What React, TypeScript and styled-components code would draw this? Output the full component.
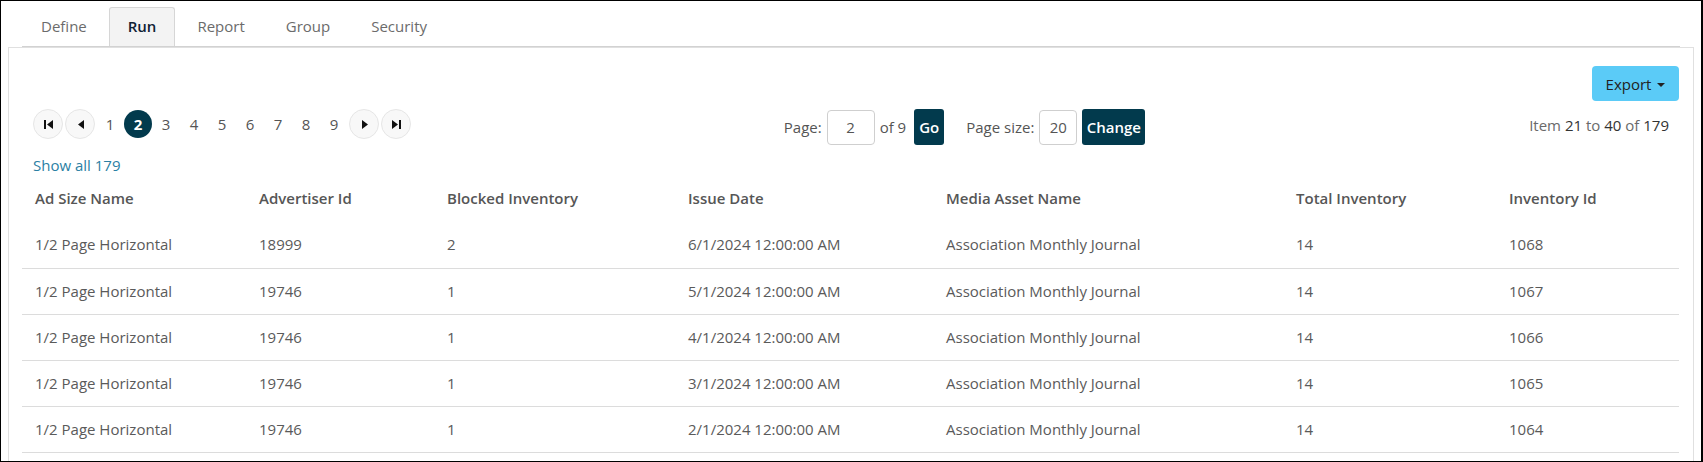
import React from "react";
import styled, { createGlobalStyle } from "styled-components";

const GlobalStyle = createGlobalStyle`
  * { box-sizing: border-box; }
  html, body { margin: 0; padding: 0; background: #fff; }
  body { font-family: "Open Sans", "Noto Sans", Arial, sans-serif; }
`;

const Frame = styled.div`
  width: 1703px;
  height: 462px;
  border-style: solid;
  border-color: #000;
  border-width: 1px 2px 1px 1px;
  overflow: hidden;
  background: #fff;
  padding: 6px 7px 0 7px;
`;

const TabBar = styled.ul`
  list-style: none;
  margin: 0 14px;
  padding: 0;
  display: flex;
  border-bottom: 1px solid #d2d2d2;
`;

const Tab = styled.li<{ $active?: boolean }>`
  height: 39px;
  display: flex;
  align-items: center;
  padding: 0 18px 2px;
  margin-right: 3px;
  font-size: 15px;
  border: 1px solid ${(p) => (p.$active ? "#d6d6d6" : "transparent")};
  border-bottom: none;
  border-radius: 3px 3px 0 0;
  background: ${(p) => (p.$active ? "#f3f3f3" : "transparent")};
  color: ${(p) => (p.$active ? "#0f2234" : "#6b6b6b")};
  font-weight: ${(p) => (p.$active ? 600 : 400)};
`;

const Panel = styled.div`
  border: 1px solid #e0e0e0;
  border-bottom: none;
  height: 600px;
  padding: 18px 14px 0 13px;
`;

const ExportRow = styled.div`
  display: flex;
  justify-content: flex-end;
`;

const ExportButton = styled.button`
  width: 87px;
  height: 35px;
  border: none;
  border-radius: 4px;
  background: #5bcbf7;
  color: #222;
  font-family: inherit;
  font-size: 15px;
  display: flex;
  align-items: center;
  justify-content: center;
  gap: 6px;
  padding: 0;
`;

const Caret = styled.span`
  width: 0;
  height: 0;
  border-left: 4px solid transparent;
  border-right: 4px solid transparent;
  border-top: 4px solid #222;
  margin-top: 2px;
`;

const PagerRow = styled.div`
  margin-top: 8px;
  height: 36px;
  display: flex;
  align-items: flex-start;
  justify-content: space-between;
  padding: 0 10px 0 11px;
`;

const Pagination = styled.div`
  display: flex;
  align-items: center;
  gap: 2px;
`;

const NavButton = styled.button`
  width: 30px;
  height: 30px;
  border-radius: 50%;
  border: 1px solid #e6e6e6;
  background: #f8f8f8;
  padding: 0;
  display: flex;
  align-items: center;
  justify-content: center;
`;

const Numbers = styled.div`
  display: flex;
  align-items: center;
  margin: 0 -1px;
`;

const PageNum = styled.span<{ $active?: boolean }>`
  width: 28px;
  height: 28px;
  display: flex;
  align-items: center;
  justify-content: center;
  font-size: 15px;
  border-radius: 50%;
  color: ${(p) => (p.$active ? "#fff" : "#555")};
  background: ${(p) => (p.$active ? "#023a4d" : "transparent")};
  font-weight: ${(p) => (p.$active ? 700 : 400)};
`;

const PageControls = styled.div`
  display: flex;
  align-items: center;
  font-size: 15px;
  color: #555;
  margin-right: 11px;
`;

const Label = styled.span<{ $gapLeft?: number }>`
  margin-left: ${(p) => p.$gapLeft ?? 0}px;
`;

const NumInput = styled.div<{ $w: number }>`
  width: ${(p) => p.$w}px;
  height: 35px;
  border: 1px solid #cfcfcf;
  border-radius: 4px;
  display: flex;
  align-items: center;
  justify-content: center;
  margin: 0 5px;
  color: #555;
`;

const DarkButton = styled.button<{ $w: number; $ml?: number }>`
  width: ${(p) => p.$w}px;
  height: 36px;
  margin-left: ${(p) => p.$ml ?? 0}px;
  border: none;
  border-radius: 3px;
  background: #023a4d;
  color: #fff;
  font-family: inherit;
  font-size: 15px;
  font-weight: 600;
  padding: 0;
`;

const ItemInfo = styled.div`
  margin-top: 6px;
  line-height: 20px;
  font-size: 15px;
  color: #6a6a6a;
  b {
    font-weight: 400;
    color: #333;
  }
`;

const ShowAll = styled.a`
  display: block;
  margin: 10px 0 0 11px;
  line-height: 20px;
  font-size: 15px;
  color: #2b7fa4;
  text-decoration: none;
`;

const Table = styled.table`
  width: 100%;
  border-collapse: collapse;
  table-layout: fixed;
`;

const Th = styled.th`
  height: 47px;
  padding: 0 0 1px 13px;
  text-align: left;
  font-size: 15px;
  font-weight: 600;
  color: #565656;
  white-space: nowrap;
`;

const Tr = styled.tr`
  border-bottom: 1px solid #dcdcdc;
`;

const Td = styled.td`
  height: 46px;
  padding: 0 0 1px 13px;
  font-size: 15px;
  color: #5a5a5a;
  white-space: nowrap;
`;

const Icon = ({ kind }: { kind: "first" | "prev" | "next" | "last" }) => {
  const shapes: Record<string, React.ReactNode> = {
    first: (
      <>
        <rect x="0" y="0" width="2" height="9" />
        <polygon points="9,0 9,9 3,4.5" />
      </>
    ),
    prev: <polygon points="8,0 8,9 2,4.5" />,
    next: <polygon points="2,0 2,9 8,4.5" />,
    last: (
      <>
        <polygon points="0,0 0,9 6,4.5" />
        <rect x="7" y="0" width="2" height="9" />
      </>
    ),
  };
  return (
    <svg width="9" height="9" viewBox="0 0 9 9" fill="#111">
      {shapes[kind]}
    </svg>
  );
};

const columns = [
  { label: "Ad Size Name", w: 224 },
  { label: "Advertiser Id", w: 188 },
  { label: "Blocked Inventory", w: 241 },
  { label: "Issue Date", w: 258 },
  { label: "Media Asset Name", w: 350 },
  { label: "Total Inventory", w: 213 },
  { label: "Inventory Id", w: 0 },
];

const rows = [
  ["1/2 Page Horizontal", "18999", "2", "6/1/2024 12:00:00 AM", "Association Monthly Journal", "14", "1068"],
  ["1/2 Page Horizontal", "19746", "1", "5/1/2024 12:00:00 AM", "Association Monthly Journal", "14", "1067"],
  ["1/2 Page Horizontal", "19746", "1", "4/1/2024 12:00:00 AM", "Association Monthly Journal", "14", "1066"],
  ["1/2 Page Horizontal", "19746", "1", "3/1/2024 12:00:00 AM", "Association Monthly Journal", "14", "1065"],
  ["1/2 Page Horizontal", "19746", "1", "2/1/2024 12:00:00 AM", "Association Monthly Journal", "14", "1064"],
];

export default function App() {
  const tabs = ["Define", "Run", "Report", "Group", "Security"];
  return (
    <>
      <GlobalStyle />
      <Frame>
        <TabBar>
          {tabs.map((t) => (
            <Tab key={t} $active={t === "Run"}>
              {t}
            </Tab>
          ))}
        </TabBar>
        <Panel>
          <ExportRow>
            <ExportButton>
              Export <Caret />
            </ExportButton>
          </ExportRow>
          <PagerRow>
            <Pagination>
              <NavButton aria-label="First">
                <Icon kind="first" />
              </NavButton>
              <NavButton aria-label="Previous">
                <Icon kind="prev" />
              </NavButton>
              <Numbers>
                {[1, 2, 3, 4, 5, 6, 7, 8, 9].map((n) => (
                  <PageNum key={n} $active={n === 2}>
                    {n}
                  </PageNum>
                ))}
              </Numbers>
              <NavButton aria-label="Next">
                <Icon kind="next" />
              </NavButton>
              <NavButton aria-label="Last">
                <Icon kind="last" />
              </NavButton>
            </Pagination>
            <PageControls>
              <Label>Page:</Label>
              <NumInput $w={48}>2</NumInput>
              <Label>of 9</Label>
              <DarkButton $w={30} $ml={8}>Go</DarkButton>
              <Label $gapLeft={22}>Page size:</Label>
              <NumInput $w={38}>20</NumInput>
              <DarkButton $w={63}>Change</DarkButton>
            </PageControls>
            <ItemInfo>
              Item <b>21</b> to <b>40</b> of <b>179</b>
            </ItemInfo>
          </PagerRow>
          <ShowAll href="#">Show all 179</ShowAll>
          <Table>
            <colgroup>
              {columns.map((c) => (
                <col key={c.label} style={c.w ? { width: c.w } : undefined} />
              ))}
            </colgroup>
            <thead>
              <tr>
                {columns.map((c) => (
                  <Th key={c.label}>{c.label}</Th>
                ))}
              </tr>
            </thead>
            <tbody>
              {rows.map((r, i) => (
                <Tr key={i}>
                  {r.map((v, j) => (
                    <Td key={j}>{v}</Td>
                  ))}
                </Tr>
              ))}
            </tbody>
          </Table>
        </Panel>
      </Frame>
    </>
  );
}
